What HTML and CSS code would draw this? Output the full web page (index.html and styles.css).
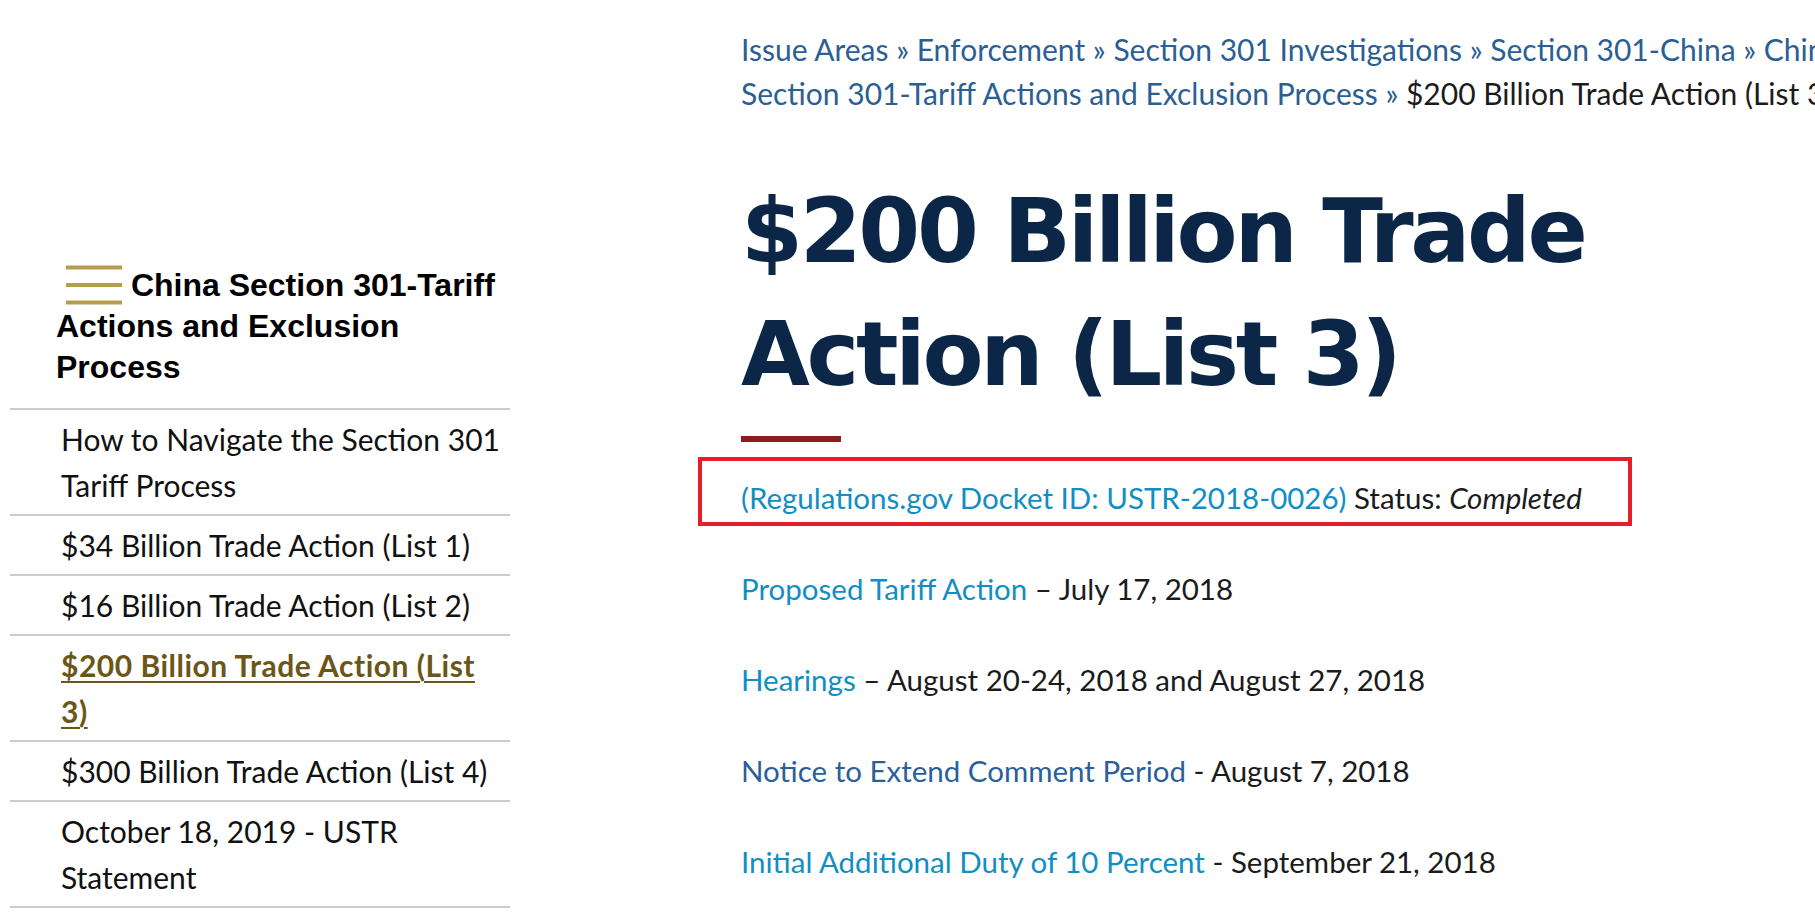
FILE: index.html
```html
<!DOCTYPE html>
<html lang="en">
<head>
<meta charset="utf-8">
<title>$200 Billion Trade Action (List 3)</title>
<link rel="stylesheet" href="styles.css">
</head>
<body>
<div class="page">
  <aside class="sidebar">
    <h2 class="side-title"><svg class="burger" width="56" height="40" viewBox="0 0 56 40" aria-hidden="true"><rect x="0" y="0.5" width="56" height="4" fill="#b59d4e"/><rect x="0" y="18" width="56" height="4" fill="#b59d4e"/><rect x="0" y="35.5" width="56" height="4" fill="#b59d4e"/></svg> China Section 301-Tariff Actions and Exclusion Process</h2>
    <ul class="side-menu">
      <li><a href="#">How to Navigate the Section 301 Tariff Process</a></li>
      <li><a href="#">$34 Billion Trade Action (List 1)</a></li>
      <li><a href="#">$16 Billion Trade Action (List 2)</a></li>
      <li class="active"><a href="#">$200 Billion Trade Action (List 3)</a></li>
      <li><a href="#">$300 Billion Trade Action (List 4)</a></li>
      <li><a href="#">October 18, 2019 - USTR Statement</a></li>
    </ul>
  </aside>
  <main class="content">
    <nav class="breadcrumb"><a href="#">Issue Areas</a><span class="sep"> » </span><a href="#">Enforcement</a><span class="sep"> » </span><a href="#">Section 301 Investigations</a><span class="sep"> » </span><a href="#">Section 301-China</a><span class="sep"> » </span><a href="#">China Section 301-Tariff Actions and Exclusion Process</a><span class="sep"> » </span><span class="current">$200 Billion Trade Action (List 3)</span></nav>
    <h1 class="title">$200 Billion Trade Action (List 3)</h1>
    <div class="title-bar"></div>
    <p class="docket"><a href="#" class="lnk">(Regulations.gov Docket ID: USTR-2018-0026)</a> Status: <em>Completed</em><span class="highlight"></span></p>
    <p><a href="#" class="lnk">Proposed Tariff Action</a> – July 17, 2018</p>
    <p><a href="#" class="lnk">Hearings</a> – August 20-24, 2018 and August 27, 2018</p>
    <p><a href="#" class="lnk visited">Notice to Extend Comment Period</a> - August 7, 2018</p>
    <p><a href="#" class="lnk">Initial Additional Duty of 10 Percent</a> - September 21, 2018</p>
  </main>
</div>
</body>
</html>
```
FILE: styles.css
```css
html, body {
  margin: 0;
  padding: 0;
  overflow: hidden;
  background: #fff;
}
body {
  font-family: Lato, "Liberation Sans", sans-serif;
  color: #1b1b1b;
}
.page {
  display: flex;
  align-items: flex-start;
  width: 2200px;
}
.sidebar {
  width: 500px;
  margin-left: 10px;
  padding-top: 265px;
  flex: none;
}
.side-title {
  margin: 0;
  padding: 0 0 20px 46px;
  font-family: "Liberation Sans", Arial, sans-serif;
  font-weight: bold;
  font-size: 32px;
  line-height: 41px;
  color: #000;
}
.burger {
  display: inline-block;
  vertical-align: middle;
  margin: -6px 0 0 10px;
}
.side-menu {
  list-style: none;
  margin: 0;
  padding: 0;
  border-bottom: 2px solid #cccccc;
}
.side-menu li {
  border-top: 2px solid #cccccc;
  padding: 6px 7px 6px 51px;
  font-size: 30px;
  line-height: 46px;
}
.side-menu a {
  color: #111;
  text-decoration: none;
}
.side-menu li.active a {
  color: #6b5618;
  font-weight: bold;
  letter-spacing: 0.5px;
  text-decoration: underline;
  text-decoration-thickness: 2px;
  text-underline-offset: 4px;
}
.content {
  margin-left: 231px;
  width: 1140px;
  flex: none;
  padding-top: 27px;
}
.breadcrumb {
  font-size: 30px;
  line-height: 44px;
  color: #2b5f94;
}
.breadcrumb a {
  color: #2b5f94;
  text-decoration: none;
}
.breadcrumb .current {
  color: #1b1b1b;
}
.title {
  margin: 55px 0 0;
  font-family: "DejaVu Sans", Verdana, sans-serif;
  font-weight: bold;
  font-size: 89px;
  line-height: 123px;
  letter-spacing: -3.3px;
  color: #0c2647;
}
.title-bar {
  width: 100px;
  height: 6px;
  background: #8e1b22;
  margin-top: 20px;
}
.content p {
  margin: 0 0 45px;
  font-size: 29.5px;
  line-height: 46px;
}
.content p.docket {
  margin-top: 33px;
  position: relative;
}
.lnk {
  color: #118ec4;
  text-decoration: none;
}
.lnk.visited {
  color: #2b5f9a;
}
.highlight {
  position: absolute;
  left: -43px;
  top: -18px;
  width: 926px;
  height: 61px;
  border: 4px solid #e61e2a;
  pointer-events: none;
}
```
